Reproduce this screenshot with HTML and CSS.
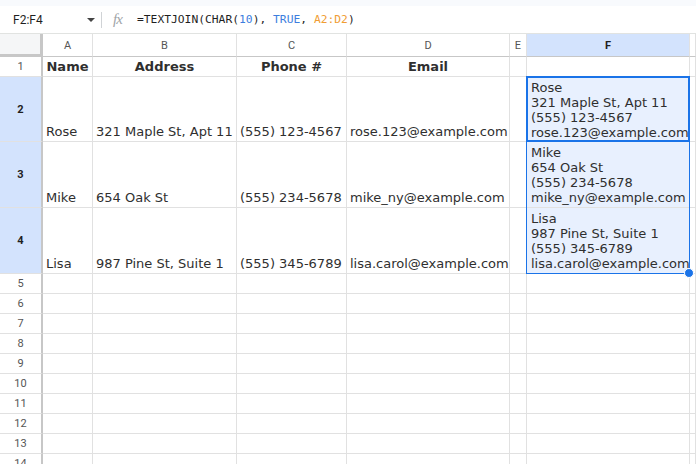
FILE: index.html
```html
<!DOCTYPE html>
<html>
<head>
<meta charset="utf-8">
<link rel="stylesheet" href="styles.css">
</head>
<body>
<div class="fbar">
  <div class="namebox"><span class="ref">F2:F4</span><span class="caret"></span></div>
  <div class="sep"></div>
  <div class="fx">fx</div>
  <div class="formula">=TEXTJOIN(CHAR(<span class="num">10</span>), <span class="bool">TRUE</span>, <span class="rng">A2:D2</span>)</div>
</div>
<div class="sheet">
  <div class="corner"></div>
  <div class="ch">A</div><div class="ch">B</div><div class="ch">C</div><div class="ch">D</div><div class="ch">E</div><div class="ch sel">F</div><div class="ch"></div>

  <div class="rh">1</div>
  <div class="c hd">Name</div><div class="c hd">Address</div><div class="c hd">Phone #</div><div class="c hd">Email</div><div class="c"></div><div class="c"></div><div class="c"></div>

  <div class="rh sel">2</div>
  <div class="c d">Rose</div><div class="c d">321 Maple St, Apt 11</div><div class="c d">(555) 123-4567</div><div class="c d">rose.123@example.com</div><div class="c"></div>
  <div class="c f r2">Rose
321 Maple St, Apt 11
(555) 123-4567
rose.123@example.com</div><div class="c"></div>

  <div class="rh sel">3</div>
  <div class="c d">Mike</div><div class="c d">654 Oak St</div><div class="c d">(555) 234-5678</div><div class="c d">mike_ny@example.com</div><div class="c"></div>
  <div class="c f r3">Mike
654 Oak St
(555) 234-5678
mike_ny@example.com</div><div class="c"></div>

  <div class="rh sel">4</div>
  <div class="c d">Lisa</div><div class="c d">987 Pine St, Suite 1</div><div class="c d">(555) 345-6789</div><div class="c d">lisa.carol@example.com</div><div class="c"></div>
  <div class="c f r4">Lisa
987 Pine St, Suite 1
(555) 345-6789
lisa.carol@example.com</div><div class="c"></div>

  <div class="rh">5</div><div class="c"></div><div class="c"></div><div class="c"></div><div class="c"></div><div class="c"></div><div class="c"></div><div class="c"></div>
  <div class="rh">6</div><div class="c"></div><div class="c"></div><div class="c"></div><div class="c"></div><div class="c"></div><div class="c"></div><div class="c"></div>
  <div class="rh">7</div><div class="c"></div><div class="c"></div><div class="c"></div><div class="c"></div><div class="c"></div><div class="c"></div><div class="c"></div>
  <div class="rh">8</div><div class="c"></div><div class="c"></div><div class="c"></div><div class="c"></div><div class="c"></div><div class="c"></div><div class="c"></div>
  <div class="rh">9</div><div class="c"></div><div class="c"></div><div class="c"></div><div class="c"></div><div class="c"></div><div class="c"></div><div class="c"></div>
  <div class="rh">10</div><div class="c"></div><div class="c"></div><div class="c"></div><div class="c"></div><div class="c"></div><div class="c"></div><div class="c"></div>
  <div class="rh">11</div><div class="c"></div><div class="c"></div><div class="c"></div><div class="c"></div><div class="c"></div><div class="c"></div><div class="c"></div>
  <div class="rh">12</div><div class="c"></div><div class="c"></div><div class="c"></div><div class="c"></div><div class="c"></div><div class="c"></div><div class="c"></div>
  <div class="rh">13</div><div class="c"></div><div class="c"></div><div class="c"></div><div class="c"></div><div class="c"></div><div class="c"></div><div class="c"></div>
  <div class="rh">14</div><div class="c"></div><div class="c"></div><div class="c"></div><div class="c"></div><div class="c"></div><div class="c"></div><div class="c"></div>

  <div class="range"><span class="handle"></span></div>
  <div class="active"></div>
</div>
</body>
</html>
```
FILE: styles.css
```css
html, body {
  margin: 0;
  padding: 0;
  background: #fff;
  overflow: hidden;
}
body {
  width: 696px;
  height: 464px;
  font-family: "DejaVu Sans", Verdana, sans-serif;
  color: #2b2b2b;
}
.fbar {
  height: 27px;
  border-top: 6px solid #f8fafd;
  border-bottom: 1px solid #e1e3e1;
  display: flex;
  align-items: center;
  box-sizing: content-box;
}
.namebox {
  width: 88px;
  padding-left: 13px;
  display: flex;
  align-items: center;
  justify-content: space-between;
  font-family: Roboto, "Liberation Sans", sans-serif;
  font-size: 12px;
  color: #1f1f1f;
}
.caret {
  width: 0;
  height: 0;
  border-left: 4px solid transparent;
  border-right: 4px solid transparent;
  border-top: 4px solid #444;
  margin-right: 6px;
}
.sep {
  width: 1px;
  height: 16px;
  background: #d0d3d6;
}
.fx {
  margin-left: 11px;
  width: 24px;
  font-family: "Liberation Serif", serif;
  font-style: italic;
  font-size: 15px;
  color: #a0a4a8;
  letter-spacing: -1px;
}
.formula {
  font-family: "DejaVu Sans Mono", monospace;
  font-size: 11.3px;
  color: #1f1f1f;
  white-space: pre;
}
.num, .bool { color: #3d7ede; }
.rng { color: #f09d34; }

.sheet {
  display: grid;
  grid-template-columns: 43px 50px 144px 110px 163px 17px 163px 6px;
  grid-template-rows: 23px 20px 65px 66px 66px repeat(10, 20px);
}
.corner {
  background: #f5f6f7;
  border-right: 3px solid #c7c7c7;
  border-bottom: 3px solid #c7c7c7;
}
.ch {
  border-right: 1px solid #e1e1e1;
  border-bottom: 1px solid #c7c7c7;
  font-family: Roboto, "Liberation Sans", sans-serif;
  font-size: 11px;
  color: #555;
  display: flex;
  align-items: center;
  justify-content: center;
  padding-top: 1px;
}
.ch.sel {
  background: #d3e3fd;
  color: #1f1f1f;
  font-weight: bold;
}
.rh {
  border-right: 2px solid #c7c7c7;
  border-bottom: 1px solid #e1e1e1;
  font-family: Roboto, "Liberation Sans", sans-serif;
  font-size: 11px;
  color: #555;
  display: flex;
  align-items: center;
  justify-content: center;
}
.rh.sel {
  background: #d3e3fd;
  color: #1f1f1f;
  font-weight: bold;
}
.c {
  border-right: 1px solid #e1e1e1;
  border-bottom: 1px solid #e1e1e1;
  font-size: 13px;
  line-height: 15px;
  white-space: pre;
  overflow: hidden;
  color: #2f2f2f;
}
.hd {
  font-weight: bold;
  text-align: center;
  padding-top: 2px;
}
.d {
  display: flex;
  align-items: flex-end;
  padding: 0 0 2px 3px;
}
.f {
  background: #e8f0fe;
  padding: 3px 0 0 4px;
  grid-column: 7;
}
.r2 { grid-row: 3; }
.r3 { grid-row: 4; }
.r4 { grid-row: 5; }
.range {
  grid-column: 7;
  grid-row: 3 / 6;
  margin: -1px 0 0 -1px;
  border: 1px solid #1a73e8;
  position: relative;
  pointer-events: none;
}
.active {
  grid-column: 7;
  grid-row: 3;
  margin: -1px 0 0 -1px;
  border: 2px solid #1a73e8;
  pointer-events: none;
}
.handle {
  position: absolute;
  right: -5px;
  bottom: -5px;
  width: 8px;
  height: 8px;
  border-radius: 50%;
  background: #1a73e8;
  border: 1px solid #fff;
}
```
